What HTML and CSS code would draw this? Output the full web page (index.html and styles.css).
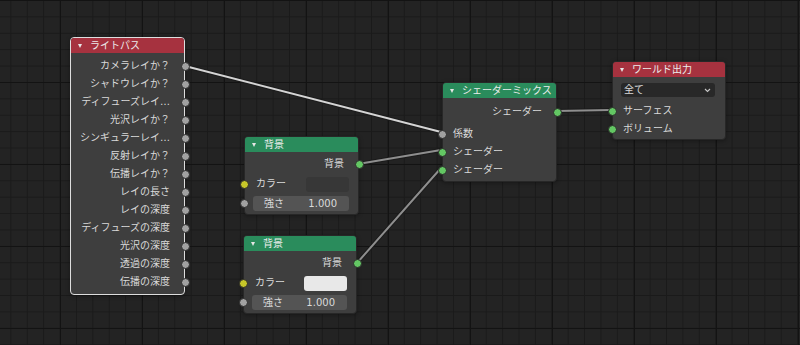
FILE: index.html
```html
<!DOCTYPE html>
<html lang="ja">
<head>
  <meta charset="UTF-8" />
  <title>シェーダーエディター</title>
  <link rel="stylesheet" href="styles.css">
</head>
<body>
  <div class="editor">
    <!-- links are drawn below the nodes -->
    <svg class="links" width="800" height="345" viewBox="0 0 800 345">
      <g class="link">
        <line x1="185" y1="66" x2="441" y2="132" class="link-edge" />
        <line x1="185" y1="66" x2="441" y2="132" class="link-core link-core--active" />
      </g>
      <g class="link">
        <line x1="358" y1="164" x2="441" y2="150" class="link-edge" />
        <line x1="358" y1="164" x2="441" y2="150" class="link-core" />
      </g>
      <g class="link">
        <line x1="357" y1="263" x2="441" y2="168" class="link-edge" />
        <line x1="357" y1="263" x2="441" y2="168" class="link-core" />
      </g>
      <g class="link">
        <line x1="556" y1="111" x2="611" y2="110" class="link-edge" />
        <line x1="556" y1="111" x2="611" y2="110" class="link-core" />
      </g>
    </svg>

    <!-- ライトパス -->
    <div class="node node-lightpath is-selected">
      <div class="node-header header-input"><span class="collapse"></span>ライトパス</div>
      <div class="node-body">
        <div class="row row-out">カメラレイか？<span class="socket socket-value"></span></div>
        <div class="row row-out">シャドウレイか？<span class="socket socket-value"></span></div>
        <div class="row row-out">ディフューズレイ…<span class="socket socket-value"></span></div>
        <div class="row row-out">光沢レイか？<span class="socket socket-value"></span></div>
        <div class="row row-out">シンギュラーレイ…<span class="socket socket-value"></span></div>
        <div class="row row-out">反射レイか？<span class="socket socket-value"></span></div>
        <div class="row row-out">伝播レイか？<span class="socket socket-value"></span></div>
        <div class="row row-out">レイの長さ<span class="socket socket-value"></span></div>
        <div class="row row-out">レイの深度<span class="socket socket-value"></span></div>
        <div class="row row-out">ディフューズの深度<span class="socket socket-value"></span></div>
        <div class="row row-out">光沢の深度<span class="socket socket-value"></span></div>
        <div class="row row-out">透過の深度<span class="socket socket-value"></span></div>
        <div class="row row-out">伝播の深度<span class="socket socket-value"></span></div>
      </div>
    </div>

    <!-- 背景 1 -->
    <div class="node node-bg1">
      <div class="node-header header-shader"><span class="collapse"></span>背景</div>
      <div class="node-body">
        <div class="row row-out">背景<span class="socket socket-shader"></span></div>
        <div class="row row-color">
          <span>カラー</span>
          <span class="swatch swatch-dark"></span>
          <span class="socket socket-color"></span>
        </div>
        <div class="row row-field">
          <div class="field"><span>強さ</span><span>1.000</span></div>
          <span class="socket socket-value"></span>
        </div>
      </div>
    </div>

    <!-- 背景 2 -->
    <div class="node node-bg2">
      <div class="node-header header-shader"><span class="collapse"></span>背景</div>
      <div class="node-body">
        <div class="row row-out">背景<span class="socket socket-shader"></span></div>
        <div class="row row-color">
          <span>カラー</span>
          <span class="swatch swatch-light"></span>
          <span class="socket socket-color"></span>
        </div>
        <div class="row row-field">
          <div class="field"><span>強さ</span><span>1.000</span></div>
          <span class="socket socket-value"></span>
        </div>
      </div>
    </div>

    <!-- シェーダーミックス -->
    <div class="node node-mix">
      <div class="node-header header-shader"><span class="collapse"></span>シェーダーミックス</div>
      <div class="node-body">
        <div class="row row-out">シェーダー<span class="socket socket-shader"></span></div>
        <div class="inputs">
          <div class="row row-in">係数<span class="socket socket-value"></span></div>
          <div class="row row-in">シェーダー<span class="socket socket-shader"></span></div>
          <div class="row row-in">シェーダー<span class="socket socket-shader"></span></div>
        </div>
      </div>
    </div>

    <!-- ワールド出力 -->
    <div class="node node-world">
      <div class="node-header header-output"><span class="collapse"></span>ワールド出力</div>
      <div class="node-body">
        <div class="dropdown">
          <span>全て</span>
          <svg width="7" height="5" viewBox="0 0 7 5"><path d="M1 1 L3.5 3.5 L6 1" fill="none" stroke="#c8c8c8" stroke-width="1.1"/></svg>
        </div>
        <div class="inputs">
          <div class="row row-in">サーフェス<span class="socket socket-shader"></span></div>
          <div class="row row-in">ボリューム<span class="socket socket-shader"></span></div>
        </div>
      </div>
    </div>
  </div>
</body>
</html>
```

FILE: styles.css
```css
html, body {
  margin: 0;
  padding: 0;
  width: 800px;
  height: 345px;
  overflow: hidden;
  background: #232323;
  font-family: 'DejaVu Sans', 'Noto Sans CJK JP', sans-serif;
  font-size: 10px;
  color: #dadada;
}

.editor {
  position: relative;
  width: 800px;
  height: 345px;
  background-color: #232323;
  background-image:
    linear-gradient(to right, #131313 1px, transparent 1px),
    linear-gradient(to bottom, #131313 1px, transparent 1px),
    linear-gradient(to right, #1a1a1a 1px, transparent 1px),
    linear-gradient(to bottom, #1a1a1a 1px, transparent 1px);
  background-size: 82px 82px, 82px 82px, 16.4px 16.4px, 16.4px 16.4px;
  background-position: 60px 0, 0 0, 10.4px 0, 0 0;
}

.links {
  position: absolute;
  left: 0;
  top: 0;
}

.link-edge {
  stroke: #1b1b1b;
  stroke-width: 4;
  stroke-linecap: round;
}

.link-core {
  stroke: #8e8e8e;
  stroke-width: 2;
  stroke-linecap: round;
}

.link-core--active {
  stroke: #d4d4d4;
}

/* nodes */
.node {
  position: absolute;
  width: 115px;
  box-sizing: border-box;
  background: #3e3e3e;
  border: 1px solid #272727;
  border-radius: 4px;
  box-shadow: 0 1px 4px rgba(0, 0, 0, 0.35);
}

.node.is-selected {
  border-color: #dedede;
}

.node-lightpath { left: 70px; top: 37px; }
.node-bg1 { left: 244px; top: 136px; }
.node-bg2 { left: 243px; top: 235px; width: 114px; }
.node-mix { left: 442px; top: 82px; }
.node-world { left: 612px; top: 61px; width: 114px; }

.node-header {
  height: 15px;
  line-height: 15px;
  padding-left: 19px;
  position: relative;
  color: #ececec;
  border-radius: 3px 3px 0 0;
  white-space: nowrap;
}

.header-input { background: #a6323f; }
.header-shader { background: #2a8c5c; }
.header-output { background: #a6323f; }

.collapse {
  position: absolute;
  left: 7px;
  top: 6px;
  width: 0;
  height: 0;
  border-left: 2.5px solid transparent;
  border-right: 2.5px solid transparent;
  border-top: 4px solid #e6e6e6;
}

.node-body {
  padding: 3px 0 3px;
}

.node-lightpath .node-body {
  padding: 4px 0 3px;
}

.node-mix .node-body {
  padding: 5px 0 2px;
}

.node-world .node-body {
  padding-bottom: 1px;
}

.row {
  position: relative;
  height: 18px;
  line-height: 18px;
  white-space: nowrap;
}

.row-out {
  text-align: right;
  padding-right: 14px;
}

.row-in {
  padding-left: 10px;
}

.inputs {
  margin-top: 4px;
}

.node-world .inputs {
  margin-top: 5px;
}

/* sockets */
.socket {
  position: absolute;
  top: 50%;
  width: 9px;
  height: 9px;
  margin-top: -4.5px;
  box-sizing: border-box;
  border-radius: 50%;
  border: 1px solid #2a2a2a;
}

.row-out .socket { right: -5.5px; }
.row-in .socket,
.row-color .socket,
.row-field .socket { left: -5.5px; }

.socket-value { background: #a1a1a1; }
.socket-shader { background: #63c763; }
.socket-color { background: #c7c729; }

/* colour + value rows */
.row-color {
  height: 22px;
  line-height: 22px;
  display: flex;
  justify-content: space-between;
  align-items: center;
  padding: 0 9px 0 11px;
}

.swatch {
  width: 43px;
  height: 15px;
  border-radius: 3px;
}

.swatch-dark { background: #373737; }
.swatch-light { background: #e8e8e8; }

.row-field {
  height: 15px;
  line-height: 15px;
  margin-top: 1px;
}

.field {
  display: flex;
  justify-content: space-between;
  height: 15px;
  margin: 0 9px 0 8px;
  padding: 0 12px 0 11px;
  background: #545454;
  border-radius: 3px;
}

.dropdown {
  display: flex;
  justify-content: space-between;
  align-items: center;
  height: 14px;
  margin: 3px 10px 0 8px;
  padding: 0 4px 0 3px;
  background: #282828;
  border-radius: 3px;
  line-height: 14px;
}
```
